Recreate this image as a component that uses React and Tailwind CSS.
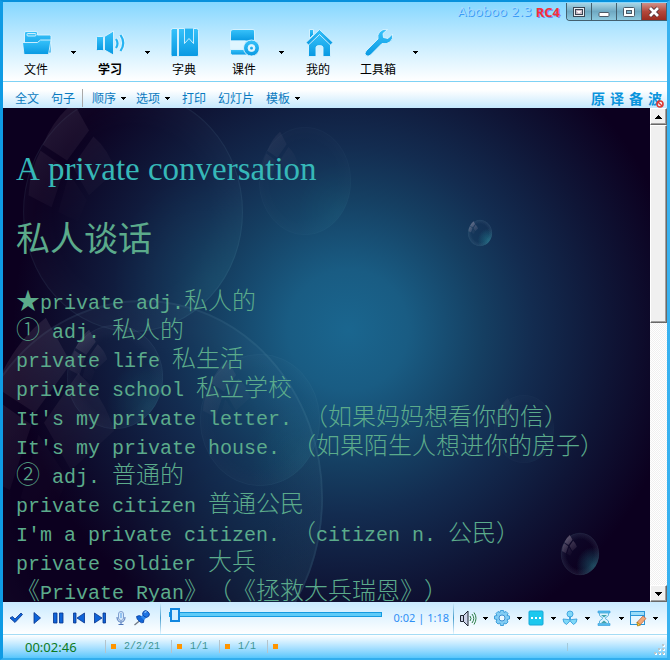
import React from "react";

const cjk = "font-['Noto_Sans_CJK_SC',sans-serif]";

function Caret() {
  return (
    <svg width="5" height="3" viewBox="0 0 5 3" shapeRendering="crispEdges" aria-hidden="true">
      <path d="M0 0h5v1H0zM1 1h3v1H1zM2 2h1v1H2z" fill="#000" />
    </svg>
  );
}

const big = { fill: "url(#sky)", stroke: "#dcf4ff", strokeWidth: 0.9 };

const bigIcons = {
  folder: (
    <g {...big}>
      <path d="M4.500 14V6q0-1.500 1.500-1.500h10q1.500 0 1.500 1.500v2h12q1.500 0 1.500 1.500V26H4.500z" />
      <rect x="7" y="6.500" width="9" height="2.500" rx="1" fill="#3fc4f8" />
      <path d="M2.500 15.500h15l3-2.500h10.500l-2.500 14.500H4z" />
    </g>
  ),
  speaker: (
    <g {...big}>
      <rect x="2.500" y="9.500" width="7" height="14" rx="1" />
      <path d="M10.500 9.500L19.500 4v24l-9-5z" />
      <g fill="none" stroke="#dcf4ff" strokeWidth="4">
        <path d="M22 12q3 4.500 0 9M26.500 8q5.500 8 0 16" />
      </g>
      <g fill="none" stroke="#25b3f2" strokeWidth="2.200">
        <path d="M22 12q3 4.500 0 9M26.500 8q5.500 8 0 16" />
      </g>
    </g>
  ),
  book: (
    <g {...big}>
      <path d="M5 1.500h4.500v28H4.500q-1.500 0-1.500-1.500V3.500q0-2 2-2z" />
      <path d="M10.500 1.500h18q2 0 2 2v24.500q0 1.500-1.500 1.500H10.500z" />
      <path d="M16.500 1.500v15l4.500-5 4.500 5v-15" fill="#22b2f2" />
    </g>
  ),
  course: (
    <g {...big}>
      <path d="M5 2.500h20q1.500 0 1.500 1.500v10H2.500V5q0-2.500 2.500-2.500z" />
      <path d="M2.500 14h15v8h-15z" fill="#dff5ff" />
      <path d="M2.500 22.500h14l3 5.500h-15q-2 0-2-2z" />
      <circle cx="23.500" cy="21" r="8" />
      <circle cx="23.500" cy="21" r="3.500" fill="#dff5ff" />
      <circle cx="23.500" cy="21" r="1.500" stroke="none" />
    </g>
  ),
  house: (
    <g {...big}>
      <path d="M6.500 16.500L17.500 6l11 10.500v13h-7.500v-9q0-2-3.500-2t-3.500 2v9H6.500z" />
      <path d="M7.500 2.500h4v5l-4 4z" />
      <path d="M17.500 2.500L31 15.500l-2.500 2.500-11-10.500-11 10.500L4 15.500z" />
    </g>
  ),
  wrench: (
    <g {...big}>
      <path d="M25.500 2.500q-5-1-8 2.500-2.500 3-1.500 7L4 24q-2 2.500 0 4.500 2 1.500 4.500-.500L20 16.500q4.500 1 8-1.500 3.500-3 2.500-8l-4.500 4.500-4.500-1-.500-4z" />
    </g>
  ),
};

const mainTools = [
  { label: "文件", icon: "folder", menu: true },
  { label: "学习", icon: "speaker", menu: true, bold: true },
  { label: "字典", icon: "book" },
  { label: "课件", icon: "course", menu: true },
  { label: "我的", icon: "house" },
  { label: "工具箱", icon: "wrench", menu: true },
];

function MainTool({ label, icon, menu, bold }) {
  return (
    <div className="flex">
      <button className="flex w-8 flex-col items-center gap-1">
        <svg width="32" height="32" viewBox="0 0 32 32" aria-hidden="true">{bigIcons[icon]}</svg>
        <span className={`text-xs leading-3 whitespace-nowrap text-black ${bold ? "font-bold" : ""}`}>{label}</span>
      </button>
      {menu ? (
        <button aria-label={`${label} menu`} className="flex w-[42px] items-start justify-center pt-6"><Caret /></button>
      ) : (
        <span className="w-7" />
      )}
    </div>
  );
}

function WindowButton({ label, red, children }) {
  return (
    <button
      aria-label={label}
      className={`flex w-[25px] items-center justify-center border-r border-[#43606f] ${
        red ? "bg-linear-to-b from-[#cf9088] via-[#b4483b] to-[#9a2c20]" : "bg-linear-to-b from-[#a9d6e6] via-[#6fa9c2] to-[#8cc9df]"
      }`}
    >
      <svg width="14" height="12" viewBox="0 0 14 12" aria-hidden="true">{children}</svg>
    </button>
  );
}

function TitleBar() {
  return (
    <div className="flex h-[19px] justify-end pt-px">
      <div className="flex gap-1 pr-[6px] text-[13px] leading-[18px]">
        <span className="font-['DejaVu_Sans',sans-serif] text-[#a3daff] [text-shadow:1px_1px_0_#3d9cf5]">Aboboo 2.3</span>
        <span className="font-['Noto_Sans',sans-serif] font-bold text-[#f5303a] [text-shadow:1px_1px_0_#6f8cf0]">RC4</span>
      </div>
      <div className="flex overflow-hidden rounded-bl border-b border-l border-[#43606f]">
        <WindowButton label="Roll up">
          <rect x="1.500" y="1.500" width="11" height="9" fill="#e8eef2" stroke="#3b4654" />
          <rect x="3.500" y="3.500" width="7" height="5" fill="#c9b8c4" stroke="#3b4654" />
          <path d="M4.500 5h5L7 7.500z" fill="#fff" />
        </WindowButton>
        <WindowButton label="Minimize">
          <rect x="2" y="6.500" width="10" height="4" rx="1" fill="#fff" stroke="#4b5966" />
        </WindowButton>
        <WindowButton label="Maximize">
          <rect x="1.500" y="1.500" width="11" height="9" rx="1" fill="#fff" stroke="#4b5966" />
          <rect x="4.500" y="4.500" width="5" height="3" fill="#7db4cc" stroke="#4b5966" />
        </WindowButton>
        <WindowButton label="Close" red>
          <path d="M3 2l8 8M11 2l-8 8" stroke="#4b3038" strokeWidth="4.500" />
          <path d="M3 2l8 8M11 2l-8 8" stroke="#fff" strokeWidth="2.800" />
        </WindowButton>
      </div>
    </div>
  );
}

function SubTool({ label, menu }) {
  return (
    <button className="flex items-center gap-[5px] whitespace-nowrap">
      {label}
      {menu && <Caret />}
    </button>
  );
}

function SubBar() {
  return (
    <div className="flex h-[26px] items-center bg-linear-to-b from-white from-30% to-[#c5e8fd] pt-1.5 pr-[5px] pl-3 text-xs leading-5 text-[#0a7abf]">
      <div className="flex gap-3">
        <SubTool label="全文" />
        <SubTool label="句子" />
      </div>
      <span className="mr-[9px] ml-[7px] h-[18px] w-px bg-[#a9a9a9]" />
      <div className="mr-3 flex gap-2.5">
        <SubTool label="顺序" menu />
        <SubTool label="选项" menu />
      </div>
      <div className="flex gap-3">
        <SubTool label="打印" />
        <SubTool label="幻灯片" />
        <SubTool label="模板" menu />
      </div>
      <div className="ml-auto flex gap-[5px] text-sm leading-5 font-bold text-[#0a94dc]">
        <button>原</button>
        <button>译</button>
        <button>备</button>
        <button className="relative">
          波
          <svg className="absolute -right-0.5 bottom-0" width="8" height="8" viewBox="0 0 8 8" aria-hidden="true">
            <circle cx="4" cy="4" r="3" fill="#fff" fillOpacity=".8" stroke="#dd3a34" strokeWidth="1.600" />
            <path d="M2 2l4 4" stroke="#dd3a34" strokeWidth="1.400" />
          </svg>
        </button>
      </div>
    </div>
  );
}

function Bubble({ cx, cy, rx, ry, o = 1 }) {
  return (
    <g transform={`translate(${cx} ${cy}) scale(${rx / 100} ${ry / 100})`} opacity={o}>
      <circle r="100" fill="url(#rim)" />
      <circle r="100" fill="url(#glow)" />
      <circle r="99.500" fill="none" stroke="#7fb4c8" strokeOpacity=".16" strokeWidth="1" />
      <g fill="url(#pane)">
        <path d="M-82-56Q-72-78-54-91L-40-68-60-43z" />
        <path d="M-84-51L-62-37-74-4-95-14Q-94-34-84-51z" />
        <path d="M-55-38L-36-63Q-22-52-16-34L-40-14z" />
        <path d="M-58-32L-42-10-50 8-68 0z" opacity=".5" />
      </g>
    </g>
  );
}

function Backdrop() {
  return (
    <svg className="absolute inset-0 h-full w-full" viewBox="0 0 647 494" preserveAspectRatio="xMidYMid slice" aria-hidden="true">
      <defs>
        <radialGradient id="deep" gradientUnits="userSpaceOnUse" cx="345" cy="222" r="335">
          <stop offset="0" stopColor="#1a668f" />
          <stop offset=".18" stopColor="#195c83" />
          <stop offset=".4" stopColor="#153f62" />
          <stop offset=".55" stopColor="#132c50" />
          <stop offset=".78" stopColor="#0f1536" />
          <stop offset="1" stopColor="#0c001f" />
        </radialGradient>
        <radialGradient id="rim">
          <stop offset=".7" stopColor="#9db8d0" stopOpacity="0" />
          <stop offset="1" stopColor="#9db8d0" stopOpacity=".06" />
        </radialGradient>
        <radialGradient id="glow" cx=".85" cy=".78" r=".45">
          <stop offset="0" stopColor="#2bb0b8" stopOpacity=".2" />
          <stop offset="1" stopColor="#2bb0b8" stopOpacity="0" />
        </radialGradient>
        <linearGradient id="pane" gradientUnits="userSpaceOnUse" x1="-80" y1="-80" x2="-30" y2="0">
          <stop offset="0" stopColor="#cfb8c8" stopOpacity=".2" />
          <stop offset="1" stopColor="#cfb8c8" stopOpacity=".02" />
        </linearGradient>
      </defs>
      <rect x="-1000" y="-1000" width="2647" height="2494" fill="url(#deep)" />
      <Bubble cx={130} cy={104} rx={110} ry={120} o={0.5} />
      <Bubble cx={302} cy={73} rx={46} ry={54} o={0.35} />
      <Bubble cx={140} cy={390} rx={180} ry={198} o={0.6} />
      <Bubble cx={112} cy={269} rx={48} ry={52} o={0.8} />
      <Bubble cx={257} cy={312} rx={60} ry={66} o={0.45} />
      <Bubble cx={477} cy={125} rx={12} ry={13} />
      <Bubble cx={477} cy={125} rx={12} ry={13} />
      <Bubble cx={521} cy={321} rx={30} ry={34} o={0.4} />
      <Bubble cx={577} cy={446} rx={19} ry={21} />
      <Bubble cx={577} cy={446} rx={19} ry={21} />
    </svg>
  );
}

const lines = [
  "★private adj.私人的",
  "① adj. 私人的",
  "private life 私生活",
  "private school 私立学校",
  "It's my private letter. （如果妈妈想看你的信）",
  "It's my private house. （如果陌生人想进你的房子）",
  "② adj. 普通的",
  "private citizen 普通公民",
  "I'm a private citizen. （citizen n. 公民）",
  "private soldier 大兵",
  "《Private Ryan》（《拯救大兵瑞恩》）",
];

/* Latin runs take a 12px cell and Chinese runs a 24px cell. */
function MixedLine({ text }) {
  return (
    <p className="h-[29px] whitespace-pre">
      {text.split(/([ -~]+)/).filter(Boolean).map((run, i) =>
        /^[ -~]/.test(run) ? (
          <span key={i} className="font-['Liberation_Mono',monospace] text-[20px]">{run}</span>
        ) : (
          <span key={i}>{run}</span>
        )
      )}
    </p>
  );
}

const raised = "border border-t-white border-l-white border-r-[#696969] border-b-[#696969] bg-[#f0f0f0] shadow-[inset_-1px_-1px_0_#a0a0a0]";

function ScrollBar() {
  return (
    <div className="flex w-[17px] shrink-0 flex-col bg-[repeating-conic-gradient(#ffffff_0_25%,#f0f0f0_0_50%)] bg-[length:2px_2px]">
      <button aria-label="Scroll up" className={`flex h-[17px] shrink-0 items-center justify-center ${raised}`}>
        <span className="rotate-180"><svg width="7" height="4" viewBox="0 0 7 4" shapeRendering="crispEdges"><path d="M0 0h7v1H0zM1 1h5v1H1zM2 2h3v1H2zM3 3h1v1H3z" /></svg></span>
      </button>
      <div className="flex-1">
        <div className={`h-[43%] ${raised}`} />
      </div>
      <button aria-label="Scroll down" className={`flex h-[17px] shrink-0 items-center justify-center ${raised}`}>
        <svg width="7" height="4" viewBox="0 0 7 4" shapeRendering="crispEdges"><path d="M0 0h7v1H0zM1 1h5v1H1zM2 2h3v1H2zM3 3h1v1H3z" /></svg>
      </button>
    </div>
  );
}

function Lesson() {
  return (
    <main className="flex min-h-0 flex-1 bg-[#0c001f]">
      <div className="relative min-w-0 flex-1 overflow-hidden">
        <Backdrop />
        <article className="relative px-[13px] pt-[41px] text-[#5bab8b]">
          <h1 className="font-['Liberation_Serif',serif] text-[33px] leading-[40px] text-[#36b8b8] [font-kerning:none]">A private conversation</h1>
          <h2 className="mt-6 text-[34px] leading-[48px]">私人谈话</h2>
          <div className="mt-[23px] text-[24px] leading-[29px] font-light [text-spacing-trim:space-all]">
            {lines.map((line) => <MixedLine key={line} text={line} />)}
          </div>
        </article>
      </div>
      <ScrollBar />
    </main>
  );
}

const transport = [
  ["Done", <path d="M3 9l2.500-1.500L8 10l6-6 1.500 1.500L8 13.500z" fill="#0d63d8" stroke="#06328c" strokeWidth=".8" />],
  ["Play", <path d="M6 3.500v11l6.500-5.500z" fill="#0d63d8" stroke="#06328c" strokeWidth=".8" />],
  ["Pause", <path d="M4.500 4h3.500v10H4.500zM10.500 4H14v10h-3.500z" fill="#0d63d8" stroke="#06328c" strokeWidth=".8" />],
  ["Previous", <path d="M3.500 4H6v10H3.500zM14.500 4v10L7 9z" fill="#0d63d8" stroke="#06328c" strokeWidth=".8" />],
  ["Next", <path d="M3.500 4v10L11 9zM12 4h2.500v10H12z" fill="#0d63d8" stroke="#06328c" strokeWidth=".8" />],
  ["Record", (
    <g>
      <rect x="6.500" y="2.500" width="5" height="9" rx="2.500" fill="#d6eafb" stroke="#7f9fd0" />
      <path d="M5 8q0 5 4 5t4-5M9 13v3M6.500 15.500h5" fill="none" stroke="#4c74b8" />
      <path d="M9 4v5" stroke="#7db6ef" strokeWidth="1.500" />
    </g>
  )],
  ["Pin", (
    <g>
      <path d="M7 11.500L1.500 16" stroke="#6f7884" strokeWidth="1.300" />
      <path d="M3.500 7.500q3-2 5.500.500 3 2.500 1.500 5.500-2 1-4-1-3-2-3-5z" fill="#1166d8" stroke="#0a3fa0" strokeWidth=".8" />
      <path d="M7.500 8l3-3 3.500 3-3 3z" fill="#2b86ee" />
      <ellipse cx="13" cy="5" rx="3.500" ry="3" transform="rotate(40 13 5)" fill="#1d74e4" stroke="#0a3fa0" strokeWidth=".8" />
      <path d="M11.500 3.500l2-1" stroke="#9fd0ff" strokeWidth="1.200" />
    </g>
  )],
];

const options = [
  ["Volume", (
    <g>
      <path d="M1.500 6.500h3v6h-3zM4.500 6.500L9 2v15l-4.500-4.500z" fill="#cdd4ea" stroke="#1d2430" />
      <path d="M11 7q2 2.500 0 5M13 5q3.500 4.500 0 9M15 3.500q4 5.500 0 12" fill="none" stroke="#2c7d46" />
    </g>
  )],
  ["Settings", (
    <g>
      <path d="M7.500 1.500h3l.5 2 2-1 2 2-1 2 2.500.500v3l-2.500.500 1 2.500-2 2-2-1-.500 2.500h-3l-.500-2.500-2 1-2-2 1-2.500-2.500-.500V7l2.500-.500-1-2 2-2 2 1z" fill="#82cdf4" stroke="#3f9fdb" />
      <circle cx="9" cy="9" r="3" fill="#eaf8ff" stroke="#3f8fd0" />
    </g>
  )],
  ["Captions", (
    <g>
      <rect x="2" y="2" width="14" height="14" rx="1" fill="#1cc8ee" stroke="#16a8d8" />
      <path d="M4 9h2M8 9h2M12 9h2" stroke="#fff" strokeWidth="2" />
    </g>
  )],
  ["Speed", (
    <g fill="#7fd8f8" stroke="#3aa0dc" strokeWidth=".9">
      <circle cx="9" cy="5" r="3" />
      <path d="M8.500 8v3L7 10.500 2 10q0 4 3.500 5.500L8 13l1-1.500 1 1.500 2.500 2.500Q16 14 16 10l-5 .5-1.500.5V8z" />
    </g>
  )],
  ["Timer", (
    <g>
      <path d="M3 2h12v2H3zM3 14.500h12v2H3z" fill="#4fbdf0" stroke="#3f9fdb" strokeWidth=".7" />
      <path d="M4.500 4v2.500L8 9.300 4.500 12v2.500h9V12L10 9.300l3.500-2.800V4z" fill="#dff5ff" stroke="#5fb4de" />
      <path d="M6 6h6L9 8.500zM6 14l3-2.500 3 2.500z" fill="#3fa3ad" />
    </g>
  )],
  ["Notes", (
    <g>
      <rect x="1.500" y="2.500" width="14" height="13" fill="#e4f6ff" stroke="#2b96d8" />
      <path d="M2 3h13v3H2z" fill="#9adcf8" />
      <path d="M2 6.500h13" stroke="#2b96d8" />
      <path d="M8 13.500L14 7l3 2.500-6 6.500z" fill="#f0a878" stroke="#c06a48" strokeWidth=".8" />
      <path d="M8 13l3.500 3-3 1z" fill="#ffd23c" stroke="#a87a10" strokeWidth=".8" />
    </g>
  )],
];

function Divider() {
  return <span className="h-full w-px shrink-0 bg-linear-to-b from-[#d6effc] via-[#3f9ccc] to-[#e6f6ff]" />;
}

function Player() {
  return (
    <div className="flex h-8 shrink-0 items-center bg-linear-to-b from-[#c9eaff] to-white">
      <div className="flex shrink-0 pr-2 pl-0.5">
        {transport.map(([name, icon]) => (
          <button key={name} aria-label={name} className="flex w-[21px] justify-center">
            <svg width="18" height="18" viewBox="0 0 18 18" aria-hidden="true">{icon}</svg>
          </button>
        ))}
      </div>
      <Divider />
      <input
        type="range"
        aria-label="Position"
        min="0"
        max="78"
        defaultValue="0"
        className="mx-2 mb-2 h-[14px] min-w-0 flex-1 appearance-none bg-transparent [&::-webkit-slider-runnable-track]:h-[5px] [&::-webkit-slider-runnable-track]:border [&::-webkit-slider-runnable-track]:border-[#149be0] [&::-webkit-slider-runnable-track]:bg-[#5fcbf8] [&::-webkit-slider-thumb]:-mt-[5px] [&::-webkit-slider-thumb]:h-[14px] [&::-webkit-slider-thumb]:w-2.5 [&::-webkit-slider-thumb]:appearance-none [&::-webkit-slider-thumb]:border-2 [&::-webkit-slider-thumb]:border-[#1187e0] [&::-webkit-slider-thumb]:bg-[#d3efff]"
      />
      <span className="shrink-0 px-1 font-['Noto_Sans',sans-serif] text-[11px] leading-4 whitespace-nowrap text-[#2f8ff5]">0:02 | 1:18</span>
      <Divider />
      <div className="flex shrink-0 pr-1 pl-[5px]">
        {options.map(([name, icon]) => (
          <div key={name} className="flex">
            <button aria-label={name}>
              <svg width="18" height="18" viewBox="0 0 18 18" aria-hidden="true">{icon}</svg>
            </button>
            <button aria-label={`${name} menu`} className="flex w-4 items-center justify-center"><Caret /></button>
          </div>
        ))}
      </div>
    </div>
  );
}

function StatusCell({ wide, children }) {
  return (
    <div className={`flex h-[13px] items-center gap-2 border-l border-[#b4c4cc] pl-[5px] ${wide ? "w-[66px]" : "w-12"}`}>
      <span className="size-[5px] bg-[#ff9500]" />
      {children}
    </div>
  );
}

function StatusBar() {
  return (
    <footer className="flex h-6 shrink-0 items-center border-t border-[#a5dcf5] bg-linear-to-b from-white to-[#56c6fc] font-['Liberation_Mono',monospace] text-[10px] leading-3 text-[#3d9494]">
      <span className="w-[102px] pl-[22px] font-['Noto_Sans',sans-serif] text-[13px] leading-4 text-[#0c7a22]">00:02:46</span>
      <StatusCell wide>2/2/21</StatusCell>
      <StatusCell>1/1</StatusCell>
      <StatusCell>1/1</StatusCell>
      <StatusCell />
      <span className="mr-[86px] ml-auto h-2 w-px bg-[#a4cadb]" />
      <svg className="mr-px self-end" width="12" height="14" viewBox="0 0 12 14" shapeRendering="crispEdges" aria-hidden="true">
        <path d="M1 9h2v2H1zM5 9h2v2H5zM9 9h2v2H9zM5 5h2v2H5zM9 5h2v2H9zM9 1h2v2H9z" fill="#fff" />
        <path d="M0 8h2v2H0zM4 8h2v2H4zM8 8h2v2H8zM4 4h2v2H4zM8 4h2v2H8zM8 0h2v2H8z" fill="#b9c6cc" />
      </svg>
    </footer>
  );
}

export default function App() {
  return (
    <div className={`flex h-screen flex-col overflow-hidden border-x-[3px] border-t-2 border-b-2 border-t-[#0791dc] border-r-[#38b2f0] border-b-[#32aeee] border-l-[#0f9be4] ${cjk}`}>
      <svg width="0" height="0" className="absolute" aria-hidden="true">
        <defs>
          <linearGradient id="sky" x1="0" y1="0" x2="0" y2="1">
            <stop offset="0" stopColor="#38c2fa" />
            <stop offset="1" stopColor="#0899e2" />
          </linearGradient>
        </defs>
      </svg>
      <header className="shrink-0">
        <div className="border-b border-[#7fd2f5] bg-linear-to-b from-[#84d7ff] to-white pb-[6px]">
          <TitleBar />
          <nav aria-label="Main" className="flex pt-[6px] pl-[17px]">
            {mainTools.map((tool) => <MainTool key={tool.label} {...tool} />)}
          </nav>
        </div>
        <SubBar />
      </header>
      <Lesson />
      <Player />
      <StatusBar />
    </div>
  );
}
